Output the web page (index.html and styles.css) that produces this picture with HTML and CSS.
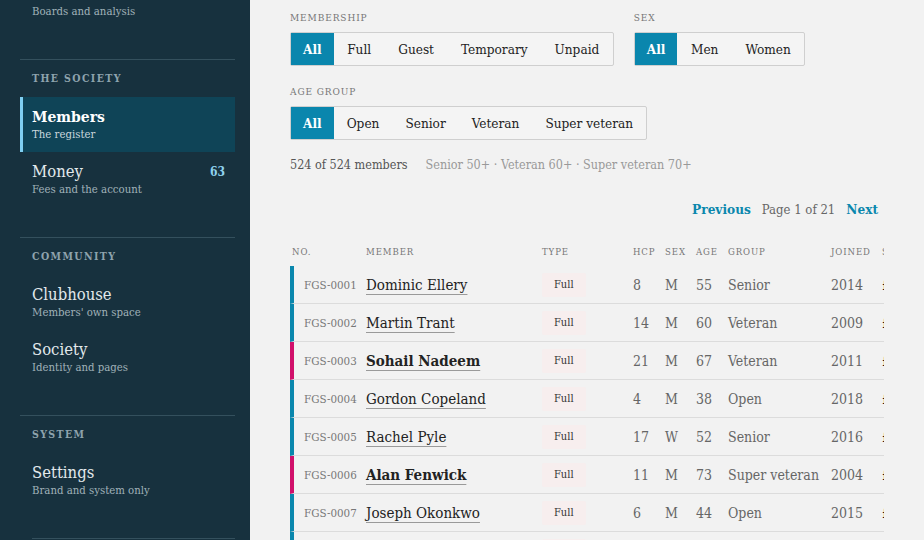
FILE: index.html
```html
<!DOCTYPE html>
<html lang="en">
<head>
<meta charset="utf-8">
<title>Members — The register</title>
<link rel="stylesheet" href="styles.css">
</head>
<body>
<div class="app">
  <aside class="sidebar">
    <div class="nav-scroll">
      <div class="nav-section first">
        <a class="nav-item"><span class="nav-text"><span class="nav-title">Results</span><span class="nav-sub">Boards and analysis</span></span></a>
      </div>
      <div class="nav-section">
        <div class="nav-label">The Society</div>
        <a class="nav-item active"><span class="nav-text"><span class="nav-title">Members</span><span class="nav-sub">The register</span></span></a>
        <a class="nav-item"><span class="nav-text"><span class="nav-title">Money</span><span class="nav-sub">Fees and the account</span></span><span class="nav-badge">63</span></a>
      </div>
      <div class="nav-section">
        <div class="nav-label">Community</div>
        <a class="nav-item"><span class="nav-text"><span class="nav-title">Clubhouse</span><span class="nav-sub">Members' own space</span></span></a>
        <a class="nav-item"><span class="nav-text"><span class="nav-title">Society</span><span class="nav-sub">Identity and pages</span></span></a>
      </div>
      <div class="nav-section">
        <div class="nav-label">System</div>
        <a class="nav-item"><span class="nav-text"><span class="nav-title">Settings</span><span class="nav-sub">Brand and system only</span></span></a>
      </div>
      <div class="nav-foot"></div>
    </div>
  </aside>

  <main class="main">
    <div class="filters">
      <div class="filter">
        <div class="filter-label">Membership</div>
        <div class="seg">
          <button class="seg-btn on">All</button><button class="seg-btn">Full</button><button class="seg-btn">Guest</button><button class="seg-btn">Temporary</button><button class="seg-btn">Unpaid</button>
        </div>
      </div>
      <div class="filter">
        <div class="filter-label">Sex</div>
        <div class="seg">
          <button class="seg-btn on">All</button><button class="seg-btn">Men</button><button class="seg-btn">Women</button>
        </div>
      </div>
    </div>
    <div class="filters row2">
      <div class="filter">
        <div class="filter-label">Age group</div>
        <div class="seg">
          <button class="seg-btn on">All</button><button class="seg-btn">Open</button><button class="seg-btn">Senior</button><button class="seg-btn">Veteran</button><button class="seg-btn">Super veteran</button>
        </div>
      </div>
    </div>

    <div class="summary"><span class="count">524 of 524 members</span><span class="hint">Senior 50+ · Veteran 60+ · Super veteran 70+</span></div>

    <div class="pager"><a class="pager-link">Previous</a><span class="pager-info">Page 1 of 21</span><a class="pager-link">Next</a></div>

    <div class="table-wrap">
      <table class="roster">
        <colgroup>
          <col class="c-no"><col class="c-name"><col class="c-type"><col class="c-hcp"><col class="c-sex"><col class="c-age"><col class="c-group"><col class="c-joined"><col class="c-subs">
        </colgroup>
        <thead>
          <tr><th class="th-no">No.</th><th>Member</th><th>Type</th><th>HCP</th><th>Sex</th><th>Age</th><th>Group</th><th>Joined</th><th>Subs</th></tr>
        </thead>
        <tbody>
          <tr class="teal"><td class="id">FGS-0001</td><td><a class="name">Dominic Ellery</a></td><td><span class="chip">Full</span></td><td>8</td><td>M</td><td>55</td><td>Senior</td><td>2014</td><td class="subs">£85</td></tr>
          <tr class="teal"><td class="id">FGS-0002</td><td><a class="name">Martin Trant</a></td><td><span class="chip">Full</span></td><td>14</td><td>M</td><td>60</td><td>Veteran</td><td>2009</td><td class="subs">£85</td></tr>
          <tr class="pink"><td class="id">FGS-0003</td><td><a class="name strong">Sohail Nadeem</a></td><td><span class="chip">Full</span></td><td>21</td><td>M</td><td>67</td><td>Veteran</td><td>2011</td><td class="subs">£85</td></tr>
          <tr class="teal"><td class="id">FGS-0004</td><td><a class="name">Gordon Copeland</a></td><td><span class="chip">Full</span></td><td>4</td><td>M</td><td>38</td><td>Open</td><td>2018</td><td class="subs">£85</td></tr>
          <tr class="teal"><td class="id">FGS-0005</td><td><a class="name">Rachel Pyle</a></td><td><span class="chip">Full</span></td><td>17</td><td>W</td><td>52</td><td>Senior</td><td>2016</td><td class="subs">£85</td></tr>
          <tr class="pink"><td class="id">FGS-0006</td><td><a class="name strong">Alan Fenwick</a></td><td><span class="chip">Full</span></td><td>11</td><td>M</td><td>73</td><td>Super veteran</td><td>2004</td><td class="subs">£85</td></tr>
          <tr class="teal"><td class="id">FGS-0007</td><td><a class="name">Joseph Okonkwo</a></td><td><span class="chip">Full</span></td><td>6</td><td>M</td><td>44</td><td>Open</td><td>2015</td><td class="subs">£85</td></tr>
          <tr class="teal"><td class="id">FGS-0008</td><td><a class="name">Peter Hollis</a></td><td><span class="chip">Full</span></td><td>19</td><td>M</td><td>58</td><td>Senior</td><td>2012</td><td class="subs">£85</td></tr>
        </tbody>
      </table>
    </div>
  </main>
</div>
</body>
</html>
```

FILE: styles.css
```css
* { box-sizing: border-box; }
html, body { margin: 0; padding: 0; height: 100%; overflow: hidden; }
body {
  font-family: "DejaVu Serif Condensed", "DejaVu Serif", "Liberation Serif", serif;
  font-stretch: condensed;
  background: #f2f2f2;
  color: #222;
}
.app { display: flex; height: 540px; width: 924px; }

/* Sidebar */
.sidebar {
  width: 250px;
  flex: 0 0 250px;
  background: #17313e;
  overflow: hidden;
}
.nav-scroll { padding: 0 15px 0 20px; margin-top: -26px; }
.nav-section { border-top: 1px solid #34505d; padding: 11px 0 30px; }
.nav-section.first { border-top: 0; padding-top: 0; }
.nav-label {
  font-size: 10.5px;
  line-height: 14px;
  font-weight: bold;
  letter-spacing: 1.4px;
  text-transform: uppercase;
  color: #8ea3ad;
  padding-left: 12px;
  margin-bottom: 12px;
}
.nav-item {
  display: flex;
  justify-content: space-between;
  align-items: flex-start;
  padding: 10px 10px 9px 12px;
  color: #e2e9ec;
}
.nav-text { display: flex; flex-direction: column; }
.nav-title { font-size: 16.5px; line-height: 20px; }
.nav-sub { font-size: 11.3px; line-height: 16px; color: #a0b1b9; }
.nav-item.active {
  background: #0f4457;
  border-left: 3px solid #7fcff2;
  padding-left: 9px;
}
.nav-item.active .nav-title { font-weight: bold; color: #fff; font-size: 15.5px; }
.nav-item.active .nav-sub { color: #c9d7dd; }
.nav-badge {
  font-size: 12px;
  line-height: 16px;
  font-weight: bold;
  color: #8fd3ee;
  margin-top: 2px;
}
.nav-foot { border-top: 1px solid #34505d; margin-left: 12px; height: 20px; }

/* Main */
.main {
  flex: 1;
  min-width: 0;
  padding: 12px 40px 0;
  overflow: hidden;
}
.filters { display: flex; gap: 20px; }
.filters.row2 { margin-top: 20px; }
.filter-label {
  font-size: 10px;
  line-height: 12px;
  letter-spacing: 0.9px;
  text-transform: uppercase;
  color: #777;
  margin-bottom: 8px;
}
.seg {
  display: inline-flex;
  border: 1px solid #cfcfcf;
  border-radius: 2px;
  background: #f4f4f4;
  height: 34px;
}
.seg-btn {
  font: inherit;
  font-stretch: condensed;
  font-size: 13.5px;
  color: #222;
  background: transparent;
  border: 0;
  padding: 0 13.5px;
  height: 32px;
}
.seg-btn.on { background: #0a86ad; color: #fff; font-weight: bold; padding: 0 12px; }
.row2 .seg-btn { padding: 0 13px; }
.row2 .seg-btn.on { padding: 0 12px; }

.summary { margin-top: 16px; font-size: 12.5px; line-height: 18px; }
.summary .count { color: #555; margin-right: 18px; }
.summary .hint { color: #999; }

.pager {
  margin-top: 25px;
  display: flex;
  justify-content: flex-end;
  align-items: baseline;
  gap: 11px;
  padding-right: 6px;
  line-height: 20px;
}
.pager-link { font-weight: bold; color: #0a87ad; font-size: 13.5px; }
.pager-info { color: #666; font-size: 13px; }

.table-wrap { margin-top: 25px; overflow: hidden; }
.roster { border-collapse: separate; border-spacing: 0; table-layout: fixed; width: 660px; }
.c-no { width: 76px; }
.c-name { width: 176px; }
.c-type { width: 91px; }
.c-hcp { width: 32px; }
.c-sex { width: 31px; }
.c-age { width: 32px; }
.c-group { width: 103px; }
.c-joined { width: 51px; }
.c-subs { width: 68px; }
.roster th {
  text-align: left;
  font-weight: normal;
  font-size: 9.5px;
  line-height: 14px;
  letter-spacing: 0.9px;
  text-transform: uppercase;
  color: #777;
  padding: 0 0 7px 0;
  white-space: nowrap;
}
.roster th.th-no { padding-left: 2px; }
.roster td {
  height: 38px;
  padding: 0;
  font-size: 14px;
  color: #666;
  border-bottom: 1px solid #dcdcdc;
  white-space: nowrap;
}
.roster td.id {
  padding-left: 10px;
  border-left: 4px solid #0a87ad;
  font-size: 11.5px;
  color: #777;
}
.roster tr.pink td.id { border-left-color: #d1106b; }
.name {
  font-size: 15px;
  color: #222;
  text-decoration: underline;
  text-decoration-color: #9a9a9a;
  text-underline-offset: 4px;
  text-decoration-thickness: 1px;
}
.name.strong { font-weight: bold; }
.chip {
  display: inline-block;
  background: #f7eeee;
  font-size: 11px;
  line-height: 15px;
  color: #333;
  padding: 4px 12px 5px;
  border-radius: 2px;
}
.roster td.subs { font-weight: bold; color: #111; }
```
